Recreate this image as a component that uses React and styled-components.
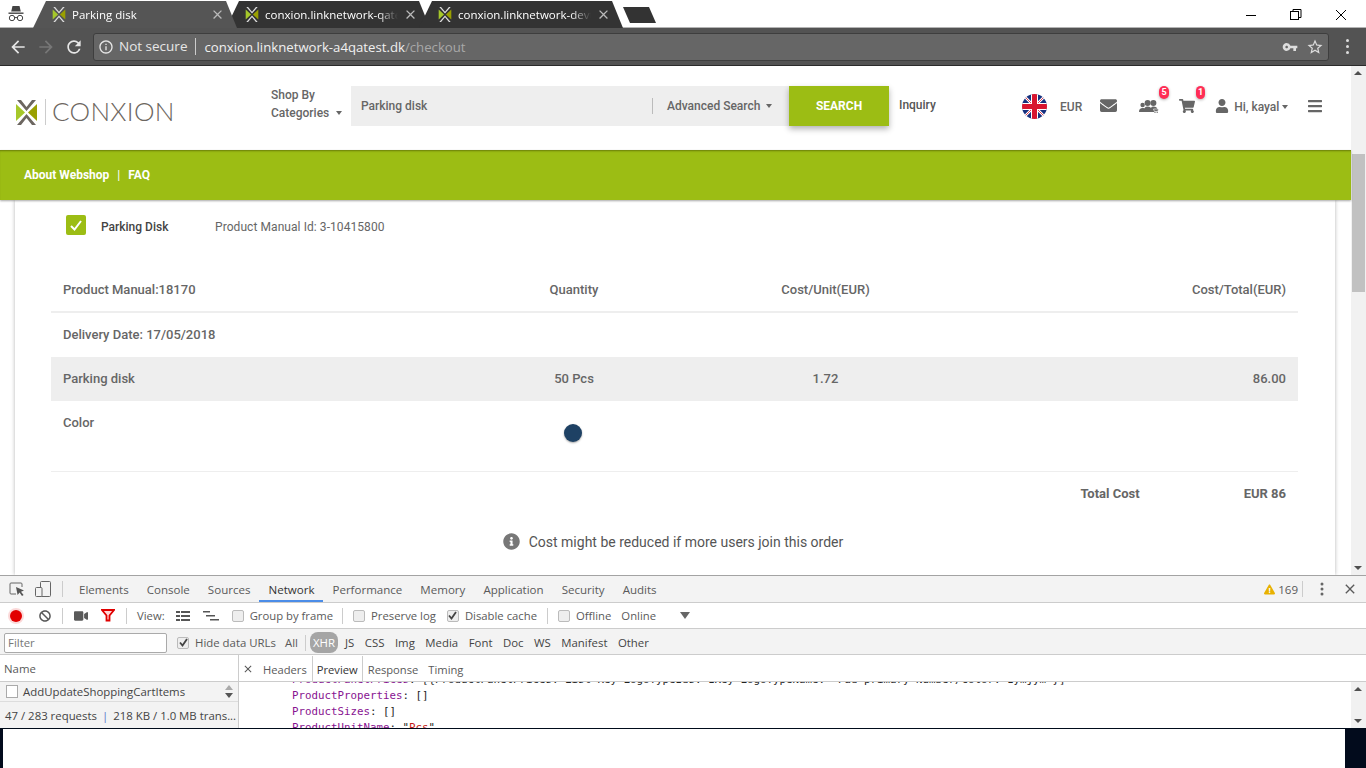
import React from "react";
import styled, { createGlobalStyle } from "styled-components";
import {
  FaEnvelope,
  FaShoppingCart,
  FaUser,
  FaBars,
  FaInfoCircle,
  FaExclamationTriangle,
  FaBan,
  FaVideo,
} from "react-icons/fa";
import { MdVpnKey, MdStarBorder, MdRefresh, MdArrowBack, MdArrowForward, MdClose, MdInfoOutline } from "react-icons/md";

const GlobalStyle = createGlobalStyle`
  html, body {
    margin: 0;
    padding: 0;
    overflow: hidden;
    background: #fff;
  }
  * {
    box-sizing: border-box;
  }
`;

const Screen = styled.div`
  width: 1366px;
  height: 768px;
  display: flex;
  flex-direction: column;
  overflow: hidden;
  font-family: Roboto, "Liberation Sans", sans-serif;
`;

/* browser chrome */
const TabStrip = styled.div`
  height: 28px;
  flex: none;
  background: #fff;
  display: flex;
  align-items: flex-end;
  box-shadow: inset 0 -1px 0 #b4b4b4;
`;

const Incognito = styled.div`
  width: 33px;
  height: 27px;
  display: flex;
  align-items: center;
  padding: 0 0 2px 8px;
`;

const Tab = styled.div`
  width: 204px;
  height: 27px;
  margin-right: -11px;
  padding: 0 12px 0 19px;
  display: flex;
  align-items: center;
  position: relative;
  background: ${(p) => (p.$active ? "#555555" : "#333333")};
  color: #fff;
  clip-path: polygon(0 100%, 13px 0, 193px 0, 204px 100%);
  z-index: ${(p) => (p.$active ? 2 : 1)};
  font-family: "Open Sans", sans-serif;
  font-size: 11.5px;
`;

const TabTitle = styled.span`
  margin-left: 6px;
  width: 133px;
  flex: none;
  white-space: nowrap;
  overflow: hidden;
  -webkit-mask-image: linear-gradient(to right, #000 85%, transparent);
  mask-image: linear-gradient(to right, #000 85%, transparent);
`;

const TabClose = styled(MdClose)`
  margin-left: auto;
  color: #b9b9b9;
  font-size: 15px;
`;

const NewTab = styled.div`
  width: 33px;
  height: 16px;
  margin: 0 0 5px 11px;
  background: #333;
  clip-path: polygon(0 0, 26px 0, 33px 100%, 7px 100%);
`;

const WindowControls = styled.div`
  margin-left: auto;
  height: 27px;
  display: flex;
  align-items: center;
  gap: 33px;
  padding-right: 19px;
`;

const Toolbar = styled.div`
  height: 38px;
  flex: none;
  background: #535353;
  border-bottom: 1px solid #2b2b2b;
  display: flex;
  align-items: center;
  padding-left: 8px;
  color: #e6e6e6;
`;

const NavIcons = styled.div`
  display: flex;
  align-items: center;
  gap: 8px;
  width: 85px;
  svg {
    width: 20px;
    height: 20px;
  }
  svg:nth-child(2) {
    color: #777;
  }
`;

const Omnibox = styled.div`
  width: 1236px;
  height: 28px;
  background: #666;
  border: 1px solid #3e3e3e;
  border-radius: 3px;
  display: flex;
  align-items: center;
  padding: 0 4px 0 4px;
  font-family: "Open Sans", sans-serif;
  font-size: 13.5px;
`;

const InsecureLabel = styled.span`
  margin-left: 5px;
  padding-right: 8px;
  border-right: 1px solid #ccc;
  line-height: 17px;
`;

const UrlHost = styled.span`
  margin-left: 8px;
  color: #f0f0f0;
  font-size: 13.2px;
`;

const UrlPath = styled.span`
  color: #a8a8a8;
`;

const OmniIcons = styled.div`
  margin-left: auto;
  display: flex;
  align-items: center;
  gap: 8px;
  color: #ddd;
`;

const MenuDots = styled.div`
  margin-left: 17px;
  display: flex;
  flex-direction: column;
  gap: 3px;
  i {
    width: 3px;
    height: 3px;
    border-radius: 50%;
    background: #ddd;
    display: block;
  }
`;

/* web page */
const Viewport = styled.div`
  height: 509px;
  flex: none;
  display: flex;
  overflow: hidden;
`;

const Page = styled.div`
  width: 1351px;
  display: flex;
  flex-direction: column;
`;

const Header = styled.div`
  height: 84px;
  background: #fff;
  display: flex;
  align-items: flex-start;
  flex: none;
`;

const Logo = styled.div`
  display: flex;
  align-items: center;
  margin: 32px 0 0 16px;
  width: 255px;
`;

const LogoDivider = styled.div`
  width: 1px;
  height: 26px;
  background: #ccc;
  margin: 0 6px 0 8px;
`;

const LogoWord = styled.span`
  font-family: Lato, sans-serif;
  font-weight: 300;
  font-size: 26px;
  line-height: 26px;
  margin-bottom: 2px;
  color: #6c6660;
  letter-spacing: 0.3px;
`;

const ShopBy = styled.div`
  width: 80px;
  margin-top: 20px;
  font-size: 12px;
  font-weight: 500;
  color: #666;
  line-height: 18px;
`;

const Caret = styled.span`
  display: inline-block;
  width: 0;
  height: 0;
  margin-left: ${(p) => p.$gap ?? 6}px;
  vertical-align: 2px;
  border-left: ${(p) => p.$size || 3.5}px solid transparent;
  border-right: ${(p) => p.$size || 3.5}px solid transparent;
  border-top: ${(p) => (p.$size ? p.$size + 2 : 4)}px solid #666;
`;

const SearchBox = styled.div`
  margin-top: 20px;
  width: 438px;
  height: 40px;
  background: #eee;
  display: flex;
  align-items: center;
  font-size: 12px;
  font-weight: 500;
  color: #666;
  padding-left: 10px;
`;

const AdvancedSearch = styled.div`
  margin-left: auto;
  width: 137px;
  height: 16px;
  border-left: 1px solid #bbb;
  padding-left: 14px;
  line-height: 16px;
`;

const SearchButton = styled.div`
  margin-top: 20px;
  width: 100px;
  height: 40px;
  background: #9cbd14;
  color: #fff;
  font-size: 12px;
  font-weight: 700;
  display: flex;
  align-items: center;
  justify-content: center;
  box-shadow: 0 3px 6px rgba(0, 0, 0, 0.3);
`;

const Inquiry = styled.div`
  margin: 32px 0 0 10px;
  width: 123px;
  font-size: 12px;
  font-weight: 500;
  color: #555;
`;

const IconGroup = styled.div`
  margin-top: 28px;
  display: flex;
  align-items: center;
  color: #666;
  height: 25px;
`;

const Currency = styled.span`
  margin: 1px 18px 0 13px;
  font-size: 12px;
  font-weight: 500;
  color: #666;
`;

const BadgeIcon = styled.div`
  position: relative;
  margin: 0 0 2px ${(p) => p.$left}px;
  display: flex;
  align-items: center;
  color: #666;
`;

const Badge = styled.span`
  position: absolute;
  top: ${(p) => p.$top}px;
  left: ${(p) => p.$left}px;
  width: ${(p) => p.$width}px;
  height: 13px;
  border-radius: 5px;
  background: #ff2d55;
  color: #fff;
  font-size: 9px;
  font-weight: 700;
  line-height: 13px;
  text-align: center;
  box-shadow: 0 1px 3px rgba(0, 0, 0, 0.3);
`;

const Greeting = styled.span`
  margin: 0 19px 0 5px;
  font-size: 12px;
  font-weight: 500;
  color: #666;
  white-space: nowrap;
`;

const MenuBars = styled(FaBars)`
  margin-bottom: 2px;
`;

const GreenBar = styled.div`
  height: 50px;
  flex: none;
  background: #9cbd14;
  box-shadow: 0 1px 2px rgba(0, 0, 0, 0.35), inset 0 2px 2px -1px rgba(70, 80, 0, 0.6);
  display: flex;
  align-items: center;
  padding-left: 24px;
  color: #fff;
  font-size: 12px;
  font-weight: 700;
  position: relative;
  z-index: 2;
`;

const BarDivider = styled.span`
  margin: 0 8px;
  font-weight: 400;
`;

const Card = styled.div`
  flex: 1;
  margin: 0 16px 0 15px;
  background: #fff;
  box-shadow: 0 0 4px rgba(0, 0, 0, 0.3);
  padding: 15px 37px 0 36px;
  color: #666;
`;

const ProductLine = styled.div`
  display: flex;
  align-items: center;
  height: 20px;
  padding-left: 15px;
  font-size: 12px;
`;

const CheckBox = styled.div`
  width: 20px;
  height: 20px;
  border-radius: 2px;
  background: #9cbd14;
  display: flex;
  align-items: center;
  justify-content: center;
`;

const ProductName = styled.span`
  margin: 3px 0 0 15px;
  width: 114px;
  font-weight: 500;
  color: #444;
`;

const ManualId = styled.span`
  margin-top: 3px;
  color: #666;
  letter-spacing: 0.07px;
`;

const Row = styled.div`
  display: grid;
  grid-template-columns: 449px 124px 379px 1fr;
  align-items: center;
  height: ${(p) => p.$h}px;
  padding: 0 12px 2px;
  font-size: 13px;
  font-weight: 500;
  color: #666;
  background: ${(p) => p.$bg || "transparent"};
`;

const HeadRow = styled(Row)`
  margin-top: 33px;
  padding: 0 12px;
  border-bottom: 2px solid #eee;
`;

const Mid = styled.span`
  text-align: center;
`;

const End = styled.span`
  text-align: right;
`;

const ColorRow = styled.div`
  height: 71px;
  padding: 14px 12px 0;
  border-bottom: 1px solid #eee;
  display: grid;
  grid-template-columns: 448px 124px;
  font-size: 13px;
  font-weight: 500;
  color: #666;
`;

const Swatch = styled.span`
  justify-self: center;
  width: 18px;
  height: 18px;
  margin-top: 9px;
  border-radius: 50%;
  background: #1e4164;
  box-shadow: 0 1px 2px rgba(0, 0, 0, 0.35);
`;

const TotalRow = styled.div`
  height: 42px;
  display: flex;
  align-items: center;
  justify-content: flex-end;
  padding-right: 12px;
  font-size: 13px;
  font-weight: 700;
  color: #666;
`;

const TotalLabel = styled.span`
  margin-right: 104px;
`;

const Note = styled.div`
  margin-top: 19px;
  display: flex;
  align-items: center;
  justify-content: center;
  gap: 9px;
  padding-right: 3px;
  font-size: 14px;
  color: #555;
  svg {
    color: #777;
    font-size: 17px;
  }
`;

const PageScrollbar = styled.div`
  width: 15px;
  background: #f1f1f1;
  position: relative;
`;

const ScrollThumb = styled.div`
  position: absolute;
  top: 88px;
  left: 1px;
  width: 13px;
  height: 138px;
  background: #c1c1c1;
`;

const Arrow = styled.span`
  position: absolute;
  left: 3px;
  ${(p) => (p.$down ? "bottom: 5px;" : "top: 5px;")}
  width: 0;
  height: 0;
  border-left: 4px solid transparent;
  border-right: 4px solid transparent;
  ${(p) => (p.$down ? "border-top: 4px solid #505050;" : "border-bottom: 4px solid #505050;")}
`;

/* devtools */
const DevTools = styled.div`
  height: 153px;
  flex: none;
  display: flex;
  flex-direction: column;
  border-top: 1px solid #a3a3a3;
  font-family: "Open Sans", sans-serif;
  font-size: 11.4px;
  color: #5a5a5a;
`;

const DevBar = styled.div`
  height: ${(p) => p.$h}px;
  flex: none;
  background: ${(p) => p.$bg || "#f3f3f3"};
  border-bottom: 1px solid #ccc;
  display: flex;
  align-items: center;
  padding: ${(p) => p.$top || 0}px 0 0 ${(p) => p.$pad || 0}px;
  font-size: ${(p) => p.$size || 11.4}px;
  white-space: nowrap;
`;

const DevTab = styled.div`
  height: 100%;
  display: flex;
  align-items: center;
  padding: 0 9px;
  box-shadow: ${(p) => (p.$on ? "inset 0 -2px 0 #4b8de8" : "none")};
  color: ${(p) => (p.$on ? "#333" : "#5a5a5a")};
`;

const Sep = styled.span`
  width: 1px;
  height: 16px;
  background: #ccc;
  margin: 0 ${(p) => p.$r ?? 8}px 0 ${(p) => p.$l ?? 8}px;
`;

const Spacer = styled.span`
  width: ${(p) => p.$w}px;
  flex: none;
`;

const DevRight = styled.div`
  margin-left: auto;
  display: flex;
  align-items: center;
  padding-right: 8px;
  gap: 3px;
`;

const Check = styled.span`
  width: 12px;
  height: 12px;
  margin: 0 ${(p) => p.$after ?? 6}px 0 ${(p) => p.$before || 0}px;
  border: 1px solid #bbb;
  border-radius: 2px;
  background: #eee;
  display: flex;
  align-items: center;
  justify-content: center;
`;

const RecordDot = styled.span`
  width: 12px;
  height: 12px;
  border-radius: 50%;
  background: #e20000;
  box-shadow: 0 0 0 2px rgba(226, 0, 0, 0.15);
`;

const FilterInput = styled.div`
  width: 163px;
  height: 20px;
  margin: 0 10px 0 4px;
  background: #fff;
  border: 1px solid #aaa;
  border-radius: 2px;
  padding-left: 3px;
  line-height: 18px;
  color: #777;
`;

const TypeChip = styled.span`
  margin-right: ${(p) => p.$gap ?? 10.5}px;
  color: ${(p) => (p.$on ? "#fff" : "#444")};
  ${(p) =>
    p.$on &&
    `
    background: #a5a5a5;
    border-radius: 8px;
    padding: 3px 3px;
    margin-left: -3px;
  `}
`;

const Split = styled.div`
  flex: 1;
  display: flex;
  min-height: 0;
`;

const LeftPane = styled.div`
  width: 239px;
  flex: none;
  border-right: 1px solid #ccc;
  display: flex;
  flex-direction: column;
`;

const RightPane = styled.div`
  flex: 1;
  display: flex;
  flex-direction: column;
  min-width: 0;
`;

const NameCell = styled.div`
  height: 27px;
  border-bottom: 1px solid #ccc;
  padding-left: 4px;
  line-height: 28px;
`;

const RequestRow = styled.div`
  height: 20px;
  background: #f3f3f3;
  border-bottom: 1px solid #ddd;
  display: flex;
  align-items: center;
  padding-left: 6px;
  position: relative;
  color: #444;
`;

const FileBox = styled.span`
  width: 12px;
  height: 13px;
  border: 1px solid #aaa;
  background: #fff;
  margin-right: 5px;
`;

const MiniScroll = styled.span`
  position: absolute;
  right: 5px;
  top: 3px;
  display: flex;
  flex-direction: column;
  gap: 3px;
  i {
    display: block;
    width: 0;
    height: 0;
    border-left: 4px solid transparent;
    border-right: 4px solid transparent;
  }
  i:first-child {
    border-bottom: 5px solid #aaa;
  }
  i:last-child {
    border-top: 5px solid #555;
  }
`;

const StatusLine = styled.div`
  flex: 1;
  background: #f3f3f3;
  display: flex;
  align-items: center;
  padding-left: 5px;
  white-space: nowrap;
  overflow: hidden;
  color: #444;
`;

const StatusSep = styled.span`
  color: #5f78c8;
  margin: 0 5px;
`;

const PreviewTabs = styled.div`
  height: 27px;
  flex: none;
  border-bottom: 1px solid #ccc;
  display: flex;
  align-items: stretch;
  padding: 1px 0 0 3px;
  font-size: 11.2px;
`;

const CloseCross = styled(MdClose)`
  align-self: center;
  font-size: 12px;
  margin-right: 4px;
  color: #555;
`;

const PreviewTab = styled.div`
  display: flex;
  align-items: center;
  padding: 2px 5px 0;
  color: #5a5a5a;
  background: #fff;
`;

const ActivePreviewTab = styled(PreviewTab)`
  padding: 2px 4px 0;
  color: #333;
  border-left: 1px solid #ccc;
  border-right: 1px solid #ccc;
`;

const JsonArea = styled.div`
  flex: 1;
  display: flex;
  min-height: 0;
`;

const JsonLines = styled.div`
  flex: 1;
  overflow: hidden;
  padding-left: 53px;
  font-family: "DejaVu Sans Mono", monospace;
  font-size: 10.8px;
  line-height: 16px;
  white-space: nowrap;
  color: #222;
`;

const JsonFirst = styled.div`
  margin-top: -10px;
`;

const Key = styled.span`
  color: #881391;
`;

const Str = styled.span`
  color: #c41a16;
`;

const JsonScroll = styled.div`
  width: 15px;
  background: #f1f1f1;
  position: relative;
`;

const BottomStrip = styled.div`
  flex: 1;
  background: #fff;
  border-top: 1px solid #000b1a;
  display: flex;
  justify-content: space-between;
`;

const StripEdge = styled.div`
  width: ${(p) => p.$w}px;
  background: #020b1c;
`;

function TabFavicon() {
  return (
    <svg width="14" height="15" viewBox="0 0 21 25">
      <path d="M0 4 L9 12.5 L0 21 Z" fill="#a6c82a" />
      <path d="M21 4 L12 12.5 L21 21 Z" fill="#9aa000" />
      <path d="M1 0 L4 0 L10.5 8 L17 0 L20 0 L10.5 11 Z" fill="#ddd" />
      <path d="M1 25 L4 25 L10.5 17 L17 25 L20 25 L10.5 14 Z" fill="#ddd" />
    </svg>
  );
}

function LogoMark() {
  return (
    <svg width="21" height="25" viewBox="0 0 21 25">
      <path d="M0 4 L9 12.5 L0 21 Z" fill="#a6c82a" />
      <path d="M21 4 L12 12.5 L21 21 Z" fill="#9aa000" />
      <path d="M1 0 L5 0 L10.5 7 L16 0 L20 0 L10.5 11 Z" fill="#6c6660" />
      <path d="M1 25 L5 25 L10.5 18 L16 25 L20 25 L10.5 14 Z" fill="#6c6660" />
    </svg>
  );
}

function FlagIcon() {
  return (
    <svg width="25" height="25" viewBox="0 0 25 25">
      <defs>
        <clipPath id="flag-clip">
          <circle cx="12.5" cy="12.5" r="12.5" />
        </clipPath>
      </defs>
      <g clipPath="url(#flag-clip)">
        <rect width="25" height="25" fill="#16307e" />
        <path d="M0 0 L25 25 M25 0 L0 25" stroke="#fff" strokeWidth="2.6" />
        <path d="M0 0 L25 25 M25 0 L0 25" stroke="#d8152f" strokeWidth="0.8" />
        <rect x="9" width="7" height="25" fill="#fff" />
        <rect y="9" width="25" height="7" fill="#fff" />
        <rect x="10" width="5" height="25" fill="#d8152f" />
        <rect y="10" width="25" height="5" fill="#d8152f" />
      </g>
    </svg>
  );
}

function IncognitoIcon() {
  return (
    <svg width="16" height="17" viewBox="0 0 16 17">
      <path d="M4.5 1 L11.5 1 L12.8 6.5 L3.2 6.5 Z" fill="#444" />
      <rect x="0.5" y="7.5" width="15" height="1.4" fill="#444" />
      <circle cx="4" cy="13" r="2.7" fill="none" stroke="#444" strokeWidth="1" />
      <circle cx="12" cy="13" r="2.7" fill="none" stroke="#444" strokeWidth="1" />
      <path d="M6.7 12.6 L9.3 12.6" stroke="#444" strokeWidth="1" />
    </svg>
  );
}

function GroupIcon() {
  return (
    <svg width="20" height="14" viewBox="0 0 20 14">
      <circle cx="3.6" cy="6" r="2.2" fill="#666" />
      <path d="M0 13 C0 10 1.5 9 3.6 9 C5 9 6 9.5 6.5 10.5 L6 13 Z" fill="#666" />
      <circle cx="8.6" cy="4" r="3" fill="#666" />
      <path d="M4.5 13 C4.5 9.5 6 7.6 8.6 7.6 C11 7.6 12 9 12.5 10 L12 13 Z" fill="#666" />
      <circle cx="14.4" cy="4" r="3" fill="#666" />
      <path d="M11 13 C11 9.5 12.2 7.6 14.4 7.6 C16.8 7.6 18.2 9 18.4 10 L15 13 Z" fill="#666" />
      <path d="M14.5 10 H19.5 L18.8 12.4 H15.4 Z" fill="#666" stroke="#fff" strokeWidth="0.6" />
      <circle cx="16" cy="13.4" r="0.6" fill="#666" />
      <circle cx="18.2" cy="13.4" r="0.6" fill="#666" />
    </svg>
  );
}

function CheckMark() {
  return (
    <svg width="12" height="11" viewBox="0 0 12 11">
      <path d="M1 6 L4.5 9.5 L11 1" fill="none" stroke="#fff" strokeWidth="2" />
    </svg>
  );
}

function SmallCheck() {
  return (
    <svg width="9" height="9" viewBox="0 0 9 9">
      <path d="M1 4.5 L3.5 7.5 L8 1" fill="none" stroke="#444" strokeWidth="1.8" />
    </svg>
  );
}

function InspectIcon() {
  return (
    <svg width="16" height="16" viewBox="0 0 16 16">
      <path d="M7 13 H2 a1 1 0 0 1 -1 -1 V3 a1 1 0 0 1 1 -1 H12 a1 1 0 0 1 1 1 V6" fill="none" stroke="#666" strokeWidth="1" />
      <path d="M7 6 L15 9.5 L12 10.8 L14.6 14 L13 15 L10.6 11.6 L8.6 14 Z" fill="#555" />
    </svg>
  );
}

function DeviceIcon() {
  return (
    <svg width="16" height="16" viewBox="0 0 16 16">
      <rect x="5.5" y="0.5" width="10" height="15" rx="1" fill="none" stroke="#666" />
      <rect x="0.5" y="6.5" width="6.5" height="9" rx="1" fill="#f3f3f3" stroke="#666" />
    </svg>
  );
}

function ListIcon() {
  return (
    <svg width="14" height="10" viewBox="0 0 14 10">
      <path d="M0 0h4v2H0zM5 0h9v2H5zM0 4h4v2H0zM5 4h9v2H5zM0 8h4v2H0zM5 8h9v2H5z" fill="#555" />
    </svg>
  );
}

function WaterfallIcon() {
  return (
    <svg width="16" height="10" viewBox="0 0 16 10">
      <path d="M0 0h7v1.6H0zM3 4h9v1.6H3zM7 8h9v1.6H7z" fill="#555" />
    </svg>
  );
}

function FunnelIcon() {
  return (
    <svg width="14" height="13" viewBox="0 0 14 13">
      <path d="M1 1 H13 L8.5 6.5 V11.5 H5.5 V6.5 Z" fill="#ffd9d9" stroke="#e00000" strokeWidth="1.8" />
    </svg>
  );
}

function MinimizeIcon() {
  return (
    <svg width="12" height="12" viewBox="0 0 12 12">
      <path d="M1 6.5 H11" stroke="#000" strokeWidth="1" />
    </svg>
  );
}

function RestoreIcon() {
  return (
    <svg width="12" height="12" viewBox="0 0 12 12">
      <rect x="0.5" y="2.5" width="8" height="8" fill="none" stroke="#000" />
      <path d="M3 2.5 V0.5 H11 V8.5 H8.5" fill="none" stroke="#000" />
    </svg>
  );
}

function CloseWindowIcon() {
  return (
    <svg width="12" height="12" viewBox="0 0 12 12">
      <path d="M1 1 L11 11 M11 1 L1 11" stroke="#000" strokeWidth="1" />
    </svg>
  );
}

function VerticalDots() {
  return (
    <svg width="4" height="14" viewBox="0 0 4 14">
      <circle cx="2" cy="2" r="1.5" fill="#666" />
      <circle cx="2" cy="7" r="1.5" fill="#666" />
      <circle cx="2" cy="12" r="1.5" fill="#666" />
    </svg>
  );
}

const devTabs = ["Elements", "Console", "Sources", "Network", "Performance", "Memory", "Application", "Security", "Audits"];
const typeChips = ["JS", "CSS", "Img", "Media", "Font", "Doc", "WS", "Manifest", "Other"];

export default function App() {
  return (
    <Screen>
      <GlobalStyle />
      <TabStrip>
        <Incognito>
          <IncognitoIcon />
        </Incognito>
        <Tab $active>
          <TabFavicon />
          <TabTitle>Parking disk</TabTitle>
          <TabClose />
        </Tab>
        <Tab>
          <TabFavicon />
          <TabTitle>conxion.linknetwork-qatest.dk</TabTitle>
          <TabClose />
        </Tab>
        <Tab>
          <TabFavicon />
          <TabTitle>conxion.linknetwork-devtest.dk</TabTitle>
          <TabClose />
        </Tab>
        <NewTab />
        <WindowControls>
          <MinimizeIcon />
          <RestoreIcon />
          <CloseWindowIcon />
        </WindowControls>
      </TabStrip>
      <Toolbar>
        <NavIcons>
          <MdArrowBack />
          <MdArrowForward />
          <MdRefresh />
        </NavIcons>
        <Omnibox>
          <MdInfoOutline size={16} />
          <InsecureLabel>Not secure</InsecureLabel>
          <UrlHost>
            conxion.linknetwork-a4qatest.dk<UrlPath>/checkout</UrlPath>
          </UrlHost>
          <OmniIcons>
            <MdVpnKey size={16} />
            <MdStarBorder size={18} />
          </OmniIcons>
        </Omnibox>
        <MenuDots>
          <i />
          <i />
          <i />
        </MenuDots>
      </Toolbar>

      <Viewport>
        <Page>
          <Header>
            <Logo>
              <LogoMark />
              <LogoDivider />
              <LogoWord>CONXION</LogoWord>
            </Logo>
            <ShopBy>
              Shop By
              <br />
              Categories
              <Caret $gap={7} />
            </ShopBy>
            <SearchBox>
              Parking disk
              <AdvancedSearch>
                Advanced Search
                <Caret />
              </AdvancedSearch>
            </SearchBox>
            <SearchButton>SEARCH</SearchButton>
            <Inquiry>Inquiry</Inquiry>
            <IconGroup>
              <FlagIcon />
              <Currency>EUR</Currency>
              <BadgeIcon $left={0}>
                <FaEnvelope size={17} />
              </BadgeIcon>
              <BadgeIcon $left={22}>
                <GroupIcon />
                <Badge $top={-13} $left={20} $width={10}>5</Badge>
              </BadgeIcon>
              <BadgeIcon $left={20}>
                <FaShoppingCart size={16} />
                <Badge $top={-12} $left={17} $width={9}>1</Badge>
              </BadgeIcon>
              <BadgeIcon $left={20}>
                <FaUser size={14} />
              </BadgeIcon>
              <Greeting>
                Hi, kayal
                <Caret $gap={3} />
              </Greeting>
              <MenuBars size={16} />
            </IconGroup>
          </Header>
          <GreenBar>
            About Webshop
            <BarDivider>|</BarDivider>
            FAQ
          </GreenBar>
          <Card>
            <ProductLine>
              <CheckBox>
                <CheckMark />
              </CheckBox>
              <ProductName>Parking Disk</ProductName>
              <ManualId>Product Manual Id: 3-10415800</ManualId>
            </ProductLine>
            <HeadRow $h={45}>
              <span>Product Manual:18170</span>
              <Mid>Quantity</Mid>
              <Mid>Cost/Unit(EUR)</Mid>
              <End>Cost/Total(EUR)</End>
            </HeadRow>
            <Row $h={44}>
              <span>Delivery Date: 17/05/2018</span>
            </Row>
            <Row $h={44} $bg="#eee">
              <span>Parking disk</span>
              <Mid>50 Pcs</Mid>
              <Mid>1.72</Mid>
              <End>86.00</End>
            </Row>
            <ColorRow>
              <span>Color</span>
              <Swatch />
            </ColorRow>
            <TotalRow>
              <TotalLabel>Total Cost</TotalLabel>
              EUR 86
            </TotalRow>
            <Note>
              <FaInfoCircle />
              Cost might be reduced if more users join this order
            </Note>
          </Card>
        </Page>
        <PageScrollbar>
          <Arrow />
          <ScrollThumb />
          <Arrow $down />
        </PageScrollbar>
      </Viewport>

      <DevTools>
        <DevBar $h={27} $pad={9} $size={11.55}>
          <InspectIcon />
          <Spacer $w={10} />
          <DeviceIcon />
          <Sep $l={11} $r={7} />
          {devTabs.map((t) => (
            <DevTab key={t} $on={t === "Network"}>
              {t}
            </DevTab>
          ))}
          <DevRight>
            <FaExclamationTriangle size={11} color="#e8b100" />
            169
            <Sep $l={1} $r={14} />
            <VerticalDots />
            <Spacer $w={12} />
            <MdClose size={16} />
          </DevRight>
        </DevBar>
        <DevBar $h={26} $bg="#fff" $pad={10} $size={11.3}>
          <RecordDot />
          <Spacer $w={17} />
          <FaBan size={12} />
          <Sep $l={11} $r={11} />
          <FaVideo size={14} />
          <Spacer $w={13} />
          <FunnelIcon />
          <Sep $l={11} $r={10} />
          View:
          <Spacer $w={11} />
          <ListIcon />
          <Spacer $w={13} />
          <WaterfallIcon />
          <Check $before={13} />
          Group by frame
          <Sep $l={9} $r={10} />
          <Check />
          Preserve log
          <Check $before={11}>
            <SmallCheck />
          </Check>
          Disable cache
          <Sep $l={10} $r={10} />
          <Check />
          Offline
          <Spacer $w={10} />
          Online
          <Caret $gap={24} $size={5} />
        </DevBar>
        <DevBar $h={26} $top={2}>
          <FilterInput>Filter</FilterInput>
          <Check>
            <SmallCheck />
          </Check>
          Hide data URLs
          <Spacer $w={9} />
          All
          <Sep $l={7} $r={7} />
          <TypeChip $on $gap={7}>XHR</TypeChip>
          {typeChips.map((t) => (
            <TypeChip key={t}>{t}</TypeChip>
          ))}
        </DevBar>
        <Split>
          <LeftPane>
            <NameCell>Name</NameCell>
            <RequestRow>
              <FileBox />
              AddUpdateShoppingCartItems
              <MiniScroll>
                <i />
                <i />
              </MiniScroll>
            </RequestRow>
            <StatusLine>
              47 / 283 requests
              <StatusSep>|</StatusSep>
              218 KB / 1.0 MB trans...
            </StatusLine>
          </LeftPane>
          <RightPane>
            <PreviewTabs>
              <CloseCross />
              <PreviewTab>Headers</PreviewTab>
              <ActivePreviewTab>Preview</ActivePreviewTab>
              <PreviewTab>Response</PreviewTab>
              <PreviewTab>Timing</PreviewTab>
            </PreviewTabs>
            <JsonArea>
              <JsonLines>
                <JsonFirst>
                  <Key>ProductPanelPrices</Key>: [{"{"}ProductPanelPrices: List&lt;Key LogoTypeIds: 1Key LogoTypeName: "Pad primary Number/Color: 1ymjym"}]
                </JsonFirst>
                <div>
                  <Key>ProductProperties</Key>: []
                </div>
                <div>
                  <Key>ProductSizes</Key>: []
                </div>
                <div>
                  <Key>ProductUnitName</Key>: "<Str>Pcs</Str>"
                </div>
              </JsonLines>
              <JsonScroll>
                <Arrow />
                <Arrow $down />
              </JsonScroll>
            </JsonArea>
          </RightPane>
        </Split>
      </DevTools>
      <BottomStrip>
        <StripEdge $w={3} />
        <StripEdge $w={21} />
      </BottomStrip>
    </Screen>
  );
}
